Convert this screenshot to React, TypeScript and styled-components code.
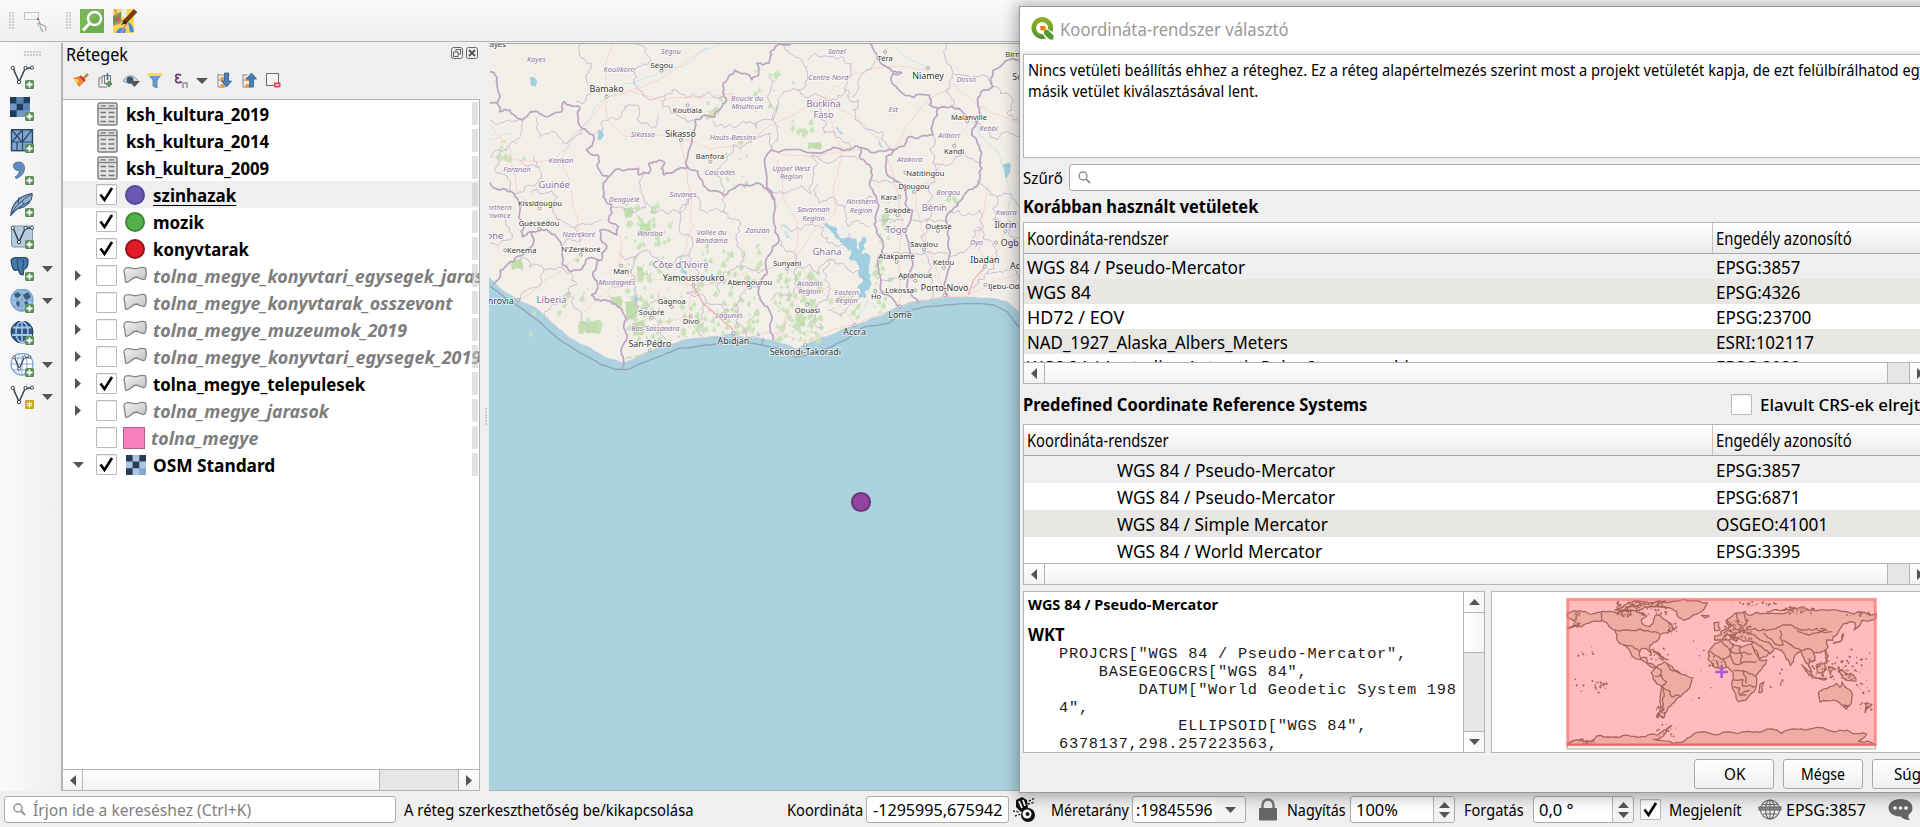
import React, { useLayoutEffect, useRef, useState } from 'react';
import styled, { createGlobalStyle, css } from 'styled-components';

const Global = createGlobalStyle`
  * { box-sizing: border-box; }
  html, body { margin: 0; padding: 0; overflow: hidden; }
  body { font-family: 'Noto Sans', 'Open Sans', sans-serif; color: #000; background: #efefef; }
  svg { display: block; flex: none; }
`;

const line = '#b4b4b4';
const purple = '#8c6d99';

/* ---------- text that fills a given width ---------- */

const FitBox = styled.span<{ $w: number }>`
  display: inline-block;
  flex: none;
  width: ${p => p.$w}px;
  white-space: pre;
`;
const FitInner = styled.span<{ $u?: boolean }>`
  display: inline-block;
  transform-origin: 0 50%;
  ${p => p.$u && css`text-decoration: underline; text-underline-offset: 3px; text-decoration-thickness: 1px;`}
`;
function Fit({ w, u, children }: { w: number; u?: boolean; children: string }) {
  const ref = useRef<HTMLSpanElement>(null);
  const [k, setK] = useState(1);
  useLayoutEffect(() => {
    if (ref.current) setK(w / ref.current.offsetWidth);
  }, [w, children]);
  return (
    <FitBox $w={w}>
      <FitInner ref={ref} $u={u} style={{ transform: `scaleX(${k})` }}>{children}</FitInner>
    </FitBox>
  );
}

/* ---------- frame ---------- */

const Screen = styled.div`
  position: relative;
  width: 1920px;
  height: 827px;
  overflow: hidden;
  display: flex;
  flex-direction: column;
  background: #efefef;
`;
const TopBar = styled.div`
  height: 42px;
  flex: none;
  display: flex;
  align-items: center;
  padding: 0 0 0 9px;
  border-bottom: 1px solid ${line};
  background: linear-gradient(#fafafa, #efefef);
`;
const Grip = styled.div<{ $w: number; $h: number; $m?: string }>`
  width: ${p => p.$w}px;
  height: ${p => p.$h}px;
  margin: ${p => p.$m || 0};
  flex: none;
  background-image: radial-gradient(circle at 1px 1px, #c9c9c9 0.7px, transparent 1px);
  background-size: 3px 3px;
`;
const IconSlot = styled.div<{ $w: number }>`
  width: ${p => p.$w}px;
  flex: none;
`;
const Main = styled.div`
  height: 749px;
  flex: none;
  display: flex;
`;
const SideBar = styled.div`
  width: 61px;
  flex: none;
  padding: 9px 0 0 10px;
  background: linear-gradient(90deg, #fafafa, #efefef);
`;
const SideItem = styled.div`
  height: 32px;
  display: flex;
  align-items: center;
  gap: 8px;
`;
const Panel = styled.div`
  width: 419px;
  flex: none;
  display: flex;
  flex-direction: column;
  border-left: 2px solid ${line};
  margin-top: 1px;
  height: 748px;
`;
const PanelTitle = styled.div`
  height: 24px;
  flex: none;
  display: flex;
  align-items: center;
  justify-content: space-between;
  padding: 0 2px 2px 3px;
  font-size: 17.5px;
`;
const PanelButtons = styled.div`
  display: flex;
  gap: 3px;
  margin-top: -3px;
`;
const PanelTools = styled.div`
  height: 32px;
  flex: none;
  display: flex;
  align-items: center;
  padding: 0 0 4px 10px;
`;
const List = styled.div`
  flex: 1;
  display: flex;
  flex-direction: column;
  background: #fff;
  border: 1px solid ${line};
  border-left: 0;
  overflow: hidden;
`;
const Layers = styled.div`
  flex: 1;
  overflow: hidden;
`;
const LayerRow = styled.div<{ $sel?: boolean; $off?: boolean }>`
  position: relative;
  height: 27px;
  display: flex;
  align-items: center;
  font-size: 18px;
  font-weight: 700;
  background: ${p => (p.$sel ? '#efefef' : '#fff')};
  ${p => p.$off && css`color: #7d7d7d; font-style: italic;`}
`;
const RowEnd = styled.div`
  position: absolute;
  right: 1px;
  top: 2px;
  width: 6px;
  height: 23px;
  background: rgba(200, 200, 200, 0.55);
`;
const Expander = styled.div<{ $down?: boolean }>`
  width: 33px;
  flex: none;
  padding-left: ${p => (p.$down ? 10 : 12)}px;
`;
const Check = styled.div<{ $m?: string }>`
  width: 21px;
  height: 21px;
  flex: none;
  margin: ${p => p.$m || 0};
  background: #fff;
  border: 1px solid #b9b9b9;
  box-shadow: inset 0 1px 1px #ededed;
  border-radius: 1px;
`;
const Glyph = styled.div<{ $w: number; $l: number }>`
  width: ${p => p.$w}px;
  padding-left: ${p => p.$l}px;
  flex: none;
`;
const Ellipse = styled.div<{ $fill: string; $edge: string }>`
  width: 20px;
  height: 20px;
  border-radius: 50%;
  background: ${p => p.$fill};
  border: 2px solid ${p => p.$edge};
`;
const PinkSquare = styled.div`
  width: 22px;
  height: 22px;
  background: #f781bf;
  border: 1px solid #b55f8e;
`;

/* ---------- scroll bars ---------- */

const HBar = styled.div`
  height: 21px;
  flex: none;
  display: flex;
  border-top: 1px solid ${line};
  background: #e6e6e6;
`;
const HPart = styled.div<{ $w: number; $side?: string }>`
  width: ${p => p.$w}px;
  flex: none;
  display: flex;
  align-items: center;
  justify-content: center;
  background: linear-gradient(#fff, #f2f2f2);
  ${p => p.$side !== 'left' && css`border-right: 1px solid ${line};`}
  ${p => p.$side === 'left' && css`border-left: 1px solid ${line};`}
`;
const Spacer = styled.div`
  flex: 1;
`;
const VBar = styled.div`
  width: 21px;
  flex: none;
  display: flex;
  flex-direction: column;
  border-left: 1px solid ${line};
  background: #e6e6e6;
`;
const VPart = styled.div<{ $h: number; $last?: boolean }>`
  height: ${p => p.$h}px;
  flex: none;
  display: flex;
  align-items: center;
  justify-content: center;
  background: linear-gradient(90deg, #fff, #f4f4f4);
  ${p => (p.$last ? css`border-top: 1px solid ${line};` : css`border-bottom: 1px solid ${line};`)}
`;
const MapPane = styled.div`
  flex: 1;
  margin: 1px 0 0 9px;
  border-top: 1px solid #a9a9a9;
  border-bottom: 1px solid ${line};
  overflow: hidden;
`;
const Splitter = styled.div`
  display: flex;
  align-items: center;
`;

/* ---------- dialog ---------- */

const Dialog = styled.div`
  position: absolute;
  left: 1019px;
  top: 6px;
  width: 960px;
  height: 787px;
  border: 1px solid #9a9a9a;
  background: #efefef;
  box-shadow: 0 1px 14px 3px rgba(0, 0, 0, 0.3);
`;
const DialogTitle = styled.div`
  height: 44px;
  display: flex;
  align-items: center;
  gap: 6px;
  padding: 0 0 1px 11px;
  background: #fff;
  color: #999;
  font-size: 17.5px;
`;
const DialogBody = styled.div`
  padding: 3px 0 0 3px;
  display: flex;
  flex-direction: column;
`;
const Message = styled.div`
  height: 104px;
  padding: 5px 5px 5px 4px;
  border: 1px solid ${line};
  background: #fff;
  font-size: 16px;
  line-height: 21px;
`;
const FilterRow = styled.div`
  height: 39px;
  display: flex;
  align-items: center;
  font-size: 17px;
`;
const Field = styled.div<{ $w: number; $h?: number; $m?: string; $p?: number }>`
  width: ${p => p.$w}px;
  height: ${p => p.$h || 27}px;
  flex: none;
  margin: ${p => p.$m || 0};
  padding-left: ${p => p.$p || 0}px;
  display: flex;
  align-items: center;
  background: #fff;
  border: 1px solid #acacac;
  border-radius: 3px;
  overflow: hidden;
`;
const Heading = styled.div<{ $h: number; $b?: number }>`
  height: ${p => p.$h}px;
  padding-bottom: ${p => p.$b || 0}px;
  display: flex;
  align-items: center;
  font-size: 17px;
  font-weight: 700;
`;
const HeadingOption = styled.div`
  display: flex;
  align-items: center;
  gap: 8px;
  margin-left: 364px;
  font-weight: 500;
`;
const Table = styled.div<{ $h: number }>`
  height: ${p => p.$h}px;
  display: flex;
  flex-direction: column;
  border: 1px solid ${line};
  background: #fff;
`;
const THead = styled.div`
  height: 31px;
  flex: none;
  display: flex;
  border-bottom: 1px solid #a6a6a6;
  background: linear-gradient(#fff, #f4f4f4 60%, #e9e9e9);
  font-size: 17.5px;
`;
const TBody = styled.div`
  flex: 1;
  min-height: 0;
  overflow: hidden;
`;
const Cell = styled.div<{ $first?: boolean; $head?: boolean; $pad?: number }>`
  ${p => (p.$first ? css`width: 689px;` : css`flex: 1;`)}
  flex-shrink: 0;
  display: flex;
  align-items: center;
  padding-left: ${p => p.$pad ?? 3}px;
  ${p => p.$head && p.$first && css`border-right: 1px solid #c4c4c4;`}
`;
const TRow = styled.div<{ $h: number; $bg: string }>`
  height: ${p => p.$h}px;
  display: flex;
  background: ${p => p.$bg};
  font-size: 17.5px;
`;
const Panes = styled.div`
  display: flex;
  gap: 6px;
  margin-top: 6px;
  height: 162px;
`;
const WktPane = styled.div`
  width: 462px;
  flex: none;
  display: flex;
  border: 1px solid ${line};
  background: #fff;
  overflow: hidden;
`;
const WktText = styled.div`
  flex: 1;
  overflow: hidden;
  padding: 2px 0 0 4px;
`;
const WktTitle = styled.div<{ $size: number; $h: number }>`
  height: ${p => p.$h}px;
  line-height: 20px;
  font-size: ${p => p.$size}px;
  font-weight: 700;
`;
const Code = styled.pre`
  margin: 0 0 0 31px;
  font: 15.3px/18px 'Liberation Mono', monospace;
  letter-spacing: 0.76px;
  color: #1a1a1a;
`;
const WorldPane = styled.div`
  flex: 1;
  border: 1px solid ${line};
  background: #fff;
`;
const Buttons = styled.div`
  display: flex;
  gap: 9px;
  margin: 6px 0 0 671px;
`;
const Button = styled.div`
  width: 80px;
  height: 30px;
  flex: none;
  display: flex;
  align-items: center;
  justify-content: center;
  border: 1px solid #a8a8a8;
  border-radius: 3px;
  background: linear-gradient(#fefefe, #efefef);
  font-size: 16px;
`;

/* ---------- status bar ---------- */

const Status = styled.div`
  height: 36px;
  flex: none;
  display: flex;
  align-items: center;
  padding: 1px 0 0 4px;
  font-size: 16px;
`;
const Gap = styled.div<{ $w: number }>`
  width: ${p => p.$w}px;
  flex: none;
`;
const Muted = styled.div`
  color: #7f7f7f;
`;
const FieldEnd = styled.div<{ $w: number; $line?: boolean }>`
  width: ${p => p.$w}px;
  height: 100%;
  margin-left: auto;
  display: flex;
  flex-direction: column;
  gap: 4px;
  align-items: center;
  justify-content: center;
  background: linear-gradient(#fbfbfb, #f0f0f0);
  ${p => p.$line && css`border-left: 1px solid #b9b9b9;`}
`;

/* ---------- small drawings ---------- */

type Dir = 'left' | 'right' | 'up' | 'down';
const triangles: Record<Dir, [number, number, string]> = {
  left: [6, 11, '6,0 0,5.5 6,11'],
  right: [6, 11, '0,0 6,5.5 0,11'],
  up: [11, 6, '0,6 5.5,0 11,6'],
  down: [11, 6, '0,0 5.5,6 11,0'],
};
function Tri({ dir }: { dir: Dir }) {
  const [w, h, pts] = triangles[dir];
  return <svg width={w} height={h}><polygon points={pts} fill="#555" /></svg>;
}
const Tick = () => (
  <svg width="19" height="19" viewBox="0 0 19 19"><path d="M3.5 9.5 L7.5 15 L15 3" fill="none" stroke="#000" strokeWidth="2.6" /></svg>
);
const Magnifier = ({ s = 13 }: { s?: number }) => (
  <svg width={s} height={s} viewBox="0 0 13 13" fill="none" stroke="#8f8f8f" strokeWidth="1.4"><circle cx="5" cy="5" r="4" /><path d="M8 8 L12 12" strokeWidth="1.8" /></svg>
);
const Plus = () => (
  <g><rect x="15" y="15" width="9" height="9" rx="1.5" fill="#5c8f5c" /><path d="M19.5 16.5V22.5M16.5 19.5H22.5" stroke="#fff" strokeWidth="1.8" /></g>
);
const Vee = ({ dark = '#33414f' }: { dark?: string }) => (
  <g fill="none" stroke={dark} strokeWidth="1.5"><path d="M3.5 4 L9 17 L15 4 L22 2.5" /><circle cx="2.8" cy="2.8" r="1.6" fill="#fff" strokeWidth="1" /><circle cx="9" cy="17" r="1.7" fill="#fff" strokeWidth="1" /><circle cx="15.5" cy="3" r="1.6" fill="#fff" strokeWidth="1" /><circle cx="22" cy="2.6" r="1.6" fill="#fff" strokeWidth="1" /></g>
);
const Globe = ({ fill, stroke }: { fill: string; stroke: string }) => (
  <g fill="none" stroke={stroke}><circle cx="12" cy="11" r="11" fill={fill} strokeWidth="1.3" /><ellipse cx="12" cy="11" rx="5" ry="11" /><path d="M12 0V22M1 11H23M3 5H21M3 17H21" /></g>
);
const sideIcons: [React.ReactNode, boolean][] = [
  [<><Vee /><Plus /></>, false],
  [<><rect width="20" height="20" fill="#7299c6" /><path d="M0 0h6.6v6.6H0zM13.3 0H20v6.6h-6.7zM6.6 6.6h6.7v6.7H6.6zM0 13.3h6.6V20H0z" fill="#233a5c" /><path d="M6.6 0h6.7v6.6H6.6zM13.3 6.6H20v6.7h-6.7z" fill="#5a83b5" /><Plus /></>, false],
  [<><rect x="1.5" y=".7" width="21" height="21" fill="#7fa4cf" stroke="#2c4663" strokeWidth="1.4" /><path d="M12.5 1V22M1 13H22M2 1L12 13M12 1L2 13M22 1L13 12M7 13V22" stroke="#2c4663" strokeWidth="1.2" /><Plus /></>, false],
  [<><path d="M9 1C4 1 2.500 4 4 7C5 9.500 8 10 9.500 9C9.500 12 8 14 5 16L6 17.500C11 16 14.500 12 14.500 7C14.500 3 12 1 9 1Z" fill="#5f8cbf" stroke="#3f6793" strokeWidth=".8" /><Plus /></>, false],
  [<><path d="M1 22C1 14 7 3 22 .5C23 7 18 14 7 16Z" fill="#8fb1d4" stroke="#33506f" strokeWidth="1.1" /><path d="M.5 23C4 14 12 7 21 1.500M8 11L9 4M12 8L14 12M8 15L20 8" fill="none" stroke="#33506f" /><Plus /></>, false],
  [<><rect x="1.500" y="1" width="21" height="21" rx="2" fill="#b7cade" stroke="#7d95ad" /><Vee /><Plus /></>, false],
  [<><path d="M1 3C3 0 7 0 9 1C12 -.5 18 0 18 4C18 9 17 12 14 12L13 18L10 17L8 12C6 15 3 13 2 9Z" fill="#4479ab" stroke="#23425f" strokeWidth="1.2" /><path d="M8 2C6 5 8 8 8 11M12 2C15 4 13 9 12 12" stroke="#23425f" fill="none" /><Plus /></>, true],
  [<><Globe fill="#9fc0e2" stroke="#7ba3cf" /><path d="M4 5l4-2 3 3-3 3-3-1zM13 6l5-3 3 5-4 3-3-2zM7 12l3 1-1 5-3-3zM14 13l3-1 2 4-3 2z" fill="#3d5d7d" /><Plus /></>, true],
  [<><circle cx="12" cy="11" r="11" fill="#32588a" stroke="#1f3656" /><path d="M3 6.500H21M2 14H22" stroke="#a9c6e6" strokeWidth="1.800" /><path d="M12 1V21" stroke="#a9c6e6" strokeWidth="1.500" /><ellipse cx="12" cy="11" rx="6" ry="10.500" fill="none" stroke="#a9c6e6" strokeWidth="1.500" /><Plus /></>, false],
  [<><Globe fill="#fff" stroke="#7fa9d6" /><g transform="translate(2 2) scale(.8)"><Vee /></g><Plus /></>, true],
  [<><Vee /><rect x="15" y="15" width="9" height="9" rx="1" fill="#c9a31a" /><path d="M19.500 16.500V22.500M16.800 18L22.200 21M22.200 18L16.800 21" stroke="#fff" strokeWidth="1.100" /></>, true],
];
const TableIcon = () => (
  <svg width="21" height="24" viewBox="0 0 21 24"><rect x="1" y="1" width="19" height="22" rx="1.500" fill="#e3e3e3" stroke="#808080" strokeWidth="1.500" /><path d="M1 6.500H20" stroke="#808080" strokeWidth="1.400" /><path d="M3.500 3.800H9M11.500 3.800H17.500M3.500 10.500H9M11.500 10.500H17.500M3.500 15H9M11.500 15H17.500M3.500 19.500H9M11.500 19.500H17.500" stroke="#747474" strokeWidth="1.300" /></svg>
);
const PolyIcon = () => (
  <svg width="24" height="20" viewBox="0 0 24 20"><defs><linearGradient id="pg" x1="0" y1="0" x2="1" y2="1"><stop offset="0" stopColor="#f4f4f4" /><stop offset="1" stopColor="#bdbdbd" /></linearGradient></defs><path d="M3 2C7 .5 10 3.500 14 2.500C17 1.500 20 .5 22.500 2C23.500 6 23.500 10 22 13C19 15 17 11.500 13 11C9 11.500 7 16.500 3 16.500C1.500 15 2.500 11 1.500 8C.5 5 1 3 3 2Z" fill="url(#pg)" stroke="#858585" strokeWidth="1.300" /></svg>
);
const OsmIcon = () => (
  <svg width="20" height="20"><rect width="20" height="20" fill="#a9c6e6" /><path d="M0 0h6.600v6.600H0zM13.300 0H20v6.600h-6.700zM6.600 6.600h6.700v6.700H6.600zM0 13.300h6.600V20H0z" fill="#2b3a50" /><path d="M13.300 13.300H20V20h-6.700z" fill="#86a6cb" /></svg>
);

/* ---------- layer tree ---------- */

type Layer = { name: string; w: number; kind: string; on?: boolean; sel?: boolean; exp?: Dir; fill?: string; edge?: string };
const layers: Layer[] = [
  { name: 'ksh_kultura_2019', w: 143, kind: 'table' },
  { name: 'ksh_kultura_2014', w: 143, kind: 'table' },
  { name: 'ksh_kultura_2009', w: 143, kind: 'table' },
  { name: 'szinhazak', w: 83, kind: 'dot', on: true, sel: true, fill: '#6a58b4', edge: '#55479a' },
  { name: 'mozik', w: 51, kind: 'dot', on: true, fill: '#54b04a', edge: '#3d8535' },
  { name: 'konyvtarak', w: 96, kind: 'dot', on: true, fill: '#e31a28', edge: '#8d1720' },
  { name: 'tolna_megye_konyvtari_egysegek_jaras', w: 330, kind: 'poly', exp: 'right' },
  { name: 'tolna_megye_konyvtarak_osszevont', w: 300, kind: 'poly', exp: 'right' },
  { name: 'tolna_megye_muzeumok_2019', w: 254, kind: 'poly', exp: 'right' },
  { name: 'tolna_megye_konyvtari_egysegek_2019', w: 328, kind: 'poly', exp: 'right' },
  { name: 'tolna_megye_telepulesek', w: 212, kind: 'poly', on: true, exp: 'right' },
  { name: 'tolna_megye_jarasok', w: 176, kind: 'poly', exp: 'right' },
  { name: 'tolna_megye', w: 107, kind: 'pink' },
  { name: 'OSM Standard', w: 122, kind: 'osm', on: true, exp: 'down' },
];

function LayerItem({ l }: { l: Layer }) {
  const table = l.kind === 'table';
  return (
    <LayerRow $sel={l.sel} $off={!l.on && !table}>
      <Expander $down={l.exp === 'down'}>{l.exp && <Tri dir={l.exp} />}</Expander>
      {table && <Glyph $w={30} $l={1}><TableIcon /></Glyph>}
      {!table && <Check>{l.on && <Tick />}</Check>}
      {l.kind === 'dot' && <Glyph $w={36} $l={8}><Ellipse $fill={l.fill!} $edge={l.edge!} /></Glyph>}
      {l.kind === 'poly' && <Glyph $w={36} $l={6}><PolyIcon /></Glyph>}
      {l.kind === 'pink' && <Glyph $w={34} $l={6}><PinkSquare /></Glyph>}
      {l.kind === 'osm' && <Glyph $w={36} $l={9}><OsmIcon /></Glyph>}
      <Fit w={l.w} u={l.sel}>{l.name}</Fit>
      <RowEnd />
    </LayerRow>
  );
}

/* ---------- map of West Africa ---------- */

type Pt = [number, number];
const parse = (s: string): Pt[] => s.trim().split(/\s+/).map(p => p.split(',').map(Number) as Pt);
function random(seed: number) {
  let a = seed;
  return () => {
    a = (a * 1664525 + 1013904223) % 4294967296;
    return a / 4294967296;
  };
}
function rough(s: string, amp: number, seed = 7) {
  const r = random(seed + s.length * 31);
  let pts = parse(s);
  for (let k = 0; k < 3; k++) {
    const out: Pt[] = [pts[0]];
    for (let i = 1; i < pts.length; i++) {
      const [x0, y0] = pts[i - 1];
      const [x1, y1] = pts[i];
      const d = Math.hypot(x1 - x0, y1 - y0);
      if (d > 9) {
        const o = (r() - 0.5) * d * amp;
        out.push([(x0 + x1) / 2 - ((y1 - y0) / d) * o, (y0 + y1) / 2 + ((x1 - x0) / d) * o]);
      }
      out.push(pts[i]);
    }
    pts = out;
  }
  return pts.map(p => p.map(v => v.toFixed(1)).join(',')).join(' ');
}

const coast = '0,715 25,740 60,765 85,782 130,800 180,845 220,880 300,925 350,955 388,968 430,955 480,932 560,905 640,893 720,882 800,895 840,900 890,918 905,928 935,912 980,892 1040,870 1080,855 1130,835 1200,803 1230,792 1290,780 1350,773 1420,772 1480,775 1530,785 1572,820';
const maritime = '0,738 8,745 60,785 100,810 140,840 200,895 260,935 330,975 370,988 410,988 470,962 560,925 640,915 750,905 805,915 860,930 905,952 940,945 1000,925 1060,895 1110,860 1180,850 1215,820 1290,800 1380,793 1440,790 1490,795 1530,815 1572,870';
const nations = [
  '0,95 20,110 30,165 22,190 28,215 60,210 95,240 120,215 160,228 215,210 220,185 265,200 262,235 272,265 305,285 308,300 285,330 318,345 318,380 350,410',
  '350,410 335,430 335,470 360,495 350,540 380,560 375,585 325,572 328,600 345,625 330,660 290,655 265,690 240,695 215,675 210,610 180,580 120,575 95,590 100,560 88,500 62,455 0,428',
  '0,188 24,190',
  '120,575 130,600 80,650 30,690 8,735',
  '320,660 318,735 300,765 360,785 400,830 400,870 388,930 388,985',
  '350,410 380,385 440,385 440,405 470,400 470,370 500,360 515,365 515,405 585,382 585,345 605,240 665,230 700,180 690,130 725,90 775,120 795,105 790,70 825,70 830,35 860,12 890,12',
  '585,382 615,395 635,440 690,465 735,435 800,432 838,470 845,500 855,600 830,640 820,700 795,740 800,780 830,850 840,900',
  '838,480 822,340 832,330 1000,330 1065,330 1080,318 1105,325 1195,330 1240,290 1310,285 1325,205 1300,195 1300,165 1210,150 1190,130 1192,100 1218,98 1190,95 1150,60 1125,12',
  '1098,325 1095,355 1130,385 1135,460 1150,500 1145,570 1165,620 1150,690 1155,750 1190,775 1210,800',
  '1195,330 1172,350 1172,395 1230,440 1228,490 1250,510 1250,770 1268,790',
  '1325,205 1365,198 1440,250 1425,285 1455,340 1455,385 1440,440 1400,470 1360,515 1355,620 1355,770',
  '1440,250 1442,180 1488,140 1490,90 1568,60',
  '805,915 810,895',
];
const regions = [
  '270,12 265,45 300,70 290,130 300,155 255,185', '430,12 460,40 470,70 435,110 440,150 520,165 560,160 600,160 690,170', '520,165 510,200 540,220 600,240',
  '305,285 340,240 390,225 425,195 435,240 480,265 500,230', '655,240 690,260 740,250 790,265 835,240 835,130 825,110', '690,465 660,400 700,350 830,280 835,330',
  '920,60 940,110 910,150 930,170 1010,180 1050,150 1090,180 1080,240 1160,275 1200,330', '920,60 870,20', '910,150 860,170 845,250 850,300 830,330', '1010,180 970,230 990,280 1040,300 1065,330', '1050,150 1070,70 1040,50 940,60', '1140,60 1090,120 1070,170',
  '830,460 900,450 950,460 950,345', '950,345 1000,370 1090,360', '970,430 975,490 1050,500 1110,490 1130,470', '1050,500 1060,560 1120,560', '860,600 900,640 910,680 1020,660 1060,690 1110,720', '860,560 920,570 990,560 1000,610 1060,580', '910,680 900,760 830,780', '1000,660 990,720 1000,780 960,830 985,860', '1100,770 1060,800 1000,810',
  '460,400 445,440 465,490 420,520 360,500', '465,490 520,520 580,500 600,470 620,510 700,520 740,545', '600,470 560,560 590,640 500,660 440,640 380,640', '700,520 695,465', '740,545 730,620 745,680 810,690', '590,640 620,700 580,760 640,790 740,780 795,740', '440,640 430,720 440,800 500,850 520,900', '400,830 470,800 500,760', '640,790 620,850 630,893', '740,780 730,850 790,893', '745,680 690,700 680,760', '430,720 380,740 320,735',
  '1130,420 1220,430', '1150,540 1225,540', '1160,640 1250,640', '1155,720 1250,715', '1310,370 1360,375 1455,370', '1310,285 1310,370 1300,440 1290,540', '1250,540 1355,545', '1250,640 1355,640', '1290,540 1280,640 1300,700 1300,780', '1360,515 1450,510 1460,560 1400,640 1360,650', '1440,420 1500,470 1568,500', '1440,560 1490,620 1470,700 1420,740', '1500,470 1490,540 1540,590 1568,600', '1470,700 1530,690 1568,720', '1488,140 1540,170 1530,220 1568,260', '1370,198 1350,150 1370,100 1350,12', '1370,100 1440,110 1488,140', '1440,240 1500,300 1568,290',
  '0,240 60,240 95,240 90,290 50,330 0,350', '135,230 150,290 230,310 270,265', '90,360 145,380 130,440 80,460 62,455', '145,380 130,350', '200,470 195,530 255,560 275,550 330,540', '120,460 200,470', '255,560 270,600 215,610', '60,600 0,610', '90,650 160,690 240,700 235,760 270,820 290,880', '160,690 140,740 90,780', '240,760 180,800 160,830', '0,520 40,530 60,600', '20,350 20,400 62,455',
];
const roads = [
  '345,170 400,160 500,120 560,80 640,30', '345,170 350,240 400,290 560,295 650,330 790,290 900,225 990,170', '345,170 340,80 360,12', '345,170 210,360 235,440 260,550 270,640', '0,350 80,360 210,360', '640,240 720,160 600,170 500,180 400,150',
  '600,735 630,790 720,870', '600,735 575,640 600,560 585,400 560,300', '600,735 480,720 380,690 390,600 350,540', '600,735 700,720 840,680 900,650 910,560 870,480 850,360', '720,875 850,880 935,905 1080,855 1210,800 1350,770 1415,770', '1080,855 990,760 900,650 1020,520 1040,330 990,170', '990,170 1080,230 1195,330 1230,260 1300,180 1370,130', '990,170 1080,100 1290,90', '1210,800 1210,660 1210,480 1170,350', '1345,765 1300,640 1260,450 1370,330 1420,240', '1415,765 1465,680 1525,575 1568,540', '1415,765 1500,720 1568,700', '1465,680 1440,600 1470,440', '85,780 200,700 270,640', '270,820 390,720', '500,850 590,830 600,735', '850,340 950,350 1040,335 1100,330', '1370,130 1450,200 1520,230 1568,250', '840,900 900,780 1000,740 1060,780', '0,250 60,330 80,460 145,500',
];
const rivers = [
  '200,350 250,280 300,230 345,170 400,130 500,95 600,60 680,12', '570,640 565,700 585,730', '430,740 440,780 405,770', '1300,100 1200,20', '1420,235 1500,330 1530,400 1540,480 1530,560', '0,300 60,280', '1080,850 1120,780', '870,560 890,600', '1150,300 1165,325',
];
const lakes = [
  '985,550 1005,558 1020,560 1045,595 1085,606 1098,640 1110,638 1125,665 1120,700 1122,740 1110,775 1092,772 1104,720 1092,680 1070,630 1035,608 1020,585', '1092,640 1092,620 1110,590 1100,640', '118,110 132,112 134,140 122,138', '322,268 332,272 328,300 318,300', '1518,372 1534,368 1536,400 1525,415', '562,655 572,690 585,705 570,700', '430,760 440,780 425,792', '868,570 885,590 880,595', '1020,260 1045,280 1040,285', '1148,300 1162,320 1152,316', '893,120 903,132 897,132', '790,875 800,885 792,893',
];
const woods = [
  '435,678 450,680 448,725 437,725', '400,785 430,780 432,835 405,845', '355,770 385,768 390,800 362,795', '262,845 325,840 328,880 262,882', '62,665 98,650 100,690 65,690', '420,850 450,840 455,885 425,890', '942,308 975,305 980,328 940,328', '395,505 420,500 420,530 400,535', '445,550 470,550 470,590 440,585', '1158,525 1180,520 1175,545 1160,560', '248,660 265,655 262,670', '1178,712 1190,712 1190,725 1178,725', '905,820 920,815 930,860 910,860', '940,700 960,705 955,720 938,718', '395,960 470,938 430,948 400,955',
];
function scatter() {
  const r = random(42);
  const zones: [number, number, number, number, number][] = [
    [840, 690, 140, 210, 120], [400, 640, 180, 260, 70], [600, 610, 200, 260, 60], [380, 480, 160, 140, 40], [640, 170, 40, 60, 12], [760, 90, 100, 160, 16], [890, 240, 60, 40, 10], [1130, 640, 40, 180, 20], [20, 300, 80, 60, 14], [100, 740, 260, 140, 20], [1150, 480, 60, 120, 12], [690, 280, 80, 160, 12], [1000, 760, 90, 80, 12], [1330, 440, 60, 60, 6], [590, 800, 200, 80, 40],
  ];
  return zones.flatMap(([x, y, w, h, n]) =>
    Array.from({ length: n }, () => {
      const s = 4 + r() * 9;
      const cx = x + r() * w;
      const cy = y + r() * h;
      return `${cx},${cy} ${cx + s * r()},${cy - s * 0.6} ${cx + s},${cy + s * r()} ${cx + s * 0.5},${cy + s * 1.3} ${cx - s * 0.4},${cy + s * 0.7}`;
    }),
  );
}
const specks = scatter();

type Label = [string, number, number, ('n' | 'c' | 't' | 'r')];
const labels: Label[] = [
  ['Kayes', 137, 58, 'r'], ['Koulikoro', 382, 88, 'r'], ['Ségou', 535, 33, 'r'], ['Ségou', 508, 76, 't'], ['Bamako', 345, 148, 'c'], ['Koutiala', 584, 211, 't'], ['Sikasso', 452, 284, 'r'], ['Sikasso', 564, 281, 'c'],
  ['Boucle du', 761, 174, 'r'], ['Mouhoun', 761, 199, 'r'], ['Hauts-Bassins', 718, 292, 'r'], ['Banfora', 651, 350, 't'], ['Cascades', 680, 398, 'r'], ['Sahel', 1026, 35, 'r'], ['Centre-Nord', 1001, 113, 'r'], ['Burkina', 987, 192, 'n'], ['Faso', 987, 223, 'n'], ['Est', 1193, 208, 'r'],
  ['Téra', 1169, 54, 't'], ['Niamey', 1296, 107, 'c'], ['Dosso', 1409, 119, 'r'], ['Birnin', 1556, 42, 't'], ['Sokoto', 1588, 110, 'c'], ['Malanville', 1417, 231, 't'], ['Kebbi', 1475, 265, 'r'], ['Alibori', 1358, 286, 'r'], ['Kandi', 1373, 335, 't'], ['Atakora', 1242, 358, 'r'], ['Natitingou', 1288, 399, 't'],
  ['Upper West', 891, 384, 'r'], ['Region', 891, 409, 'r'], ['Djougou', 1254, 440, 't'], ['Kara', 1180, 471, 't'], ['Borgou', 1356, 457, 'r'], ['Northern', 1098, 485, 'r'], ['Region', 1098, 510, 'r'], ['Savannah', 957, 509, 'r'], ['Region', 957, 534, 'r'], ['Sokodé', 1206, 511, 't'], ['Bénin', 1315, 502, 'n'], ['Kwara', 1528, 516, 'r'], ['Ouèssè', 1327, 558, 't'], ['Ilorin', 1525, 554, 'c'],
  ['Togo', 1202, 570, 'n'], ['Ghana', 997, 634, 'n'], ['Savalou', 1284, 612, 't'], ['Oyo', 1439, 608, 'r'], ['Ogbomoso', 1580, 609, 'c'], ['Atakpamé', 1203, 650, 't'], ['Kétou', 1342, 667, 't'], ['Ibadan', 1464, 661, 'c'], ['Ado', 1563, 678, 'c'], ['Aplahoué', 1258, 706, 't'], ['Lokossa', 1212, 751, 't'], ['Porto-Novo', 1345, 744, 'c'], ['Ijebu-Ode', 1526, 738, 't'], ['Ho', 1142, 770, 't'], ['Lomé', 1213, 824, 'c'], ['Accra', 1079, 877, 'c'],
  ['Ashanti', 945, 730, 'r'], ['Region', 945, 755, 'r'], ['Eastern', 1055, 757, 'r'], ['Region', 1055, 782, 'r'], ['Obuasi', 939, 810, 't'], ['Sunyani', 879, 669, 't'], ['Sekondi-Takoradi', 933, 937, 'c'], ['Abidjan', 720, 904, 'c'], ['Lagunes', 708, 827, 'r'], ['Abengourou', 769, 728, 't'], ['Zanzan', 792, 572, 'r'], ['Vallée du', 656, 577, 'r'], ['Bandama', 656, 602, 'r'], ['Woroba', 473, 580, 'r'], ['Savanes', 571, 463, 'r'], ['Denguélé', 397, 478, 'r'],
  ["Côte d'Ivoire", 564, 673, 'n'], ['Yamoussoukro', 602, 715, 'c'], ['Man', 388, 693, 't'], ['Montagnes', 375, 728, 'r'], ['Gagnoa', 538, 785, 't'], ['Soubré', 478, 818, 't'], ['Divo', 594, 845, 't'], ['Bas-Sassandra', 489, 866, 'r'], ['San-Pédro', 473, 912, 'c'], ['Liberia', 182, 780, 'n'], ['Monrovia', 12, 782, 'c'],
  ['Kankan', 210, 362, 'r'], ['Faranah', 80, 388, 'r'], ['Guinée', 190, 434, 'n'], ['Kissidougou', 148, 491, 't'], ['Guéckédou', 145, 551, 't'], ['Nzérékoré', 263, 584, 'r'], ["N'Zérékoré", 269, 628, 't'], ['Kenema', 94, 632, 't'], ['Northern', 20, 501, 'r'], ['Province', 20, 526, 'r'], ['Sierra Leone', -42, 586, 'n'], ['Kayes', 16, 14, 't'],
];
const towns = '345,170 508,92 585,196 565,300 652,365 1169,36 1296,84 1412,243 1373,317 1229,398 1211,470 1254,456 1206,526 1325,573 1525,574 1497,608 1284,628 1203,666 1342,683 1464,680 1258,722 1258,751 1345,766 1466,734 1140,754 1212,799 1079,856 939,794 879,686 933,915 720,879 769,743 602,735 388,677 538,801 478,833 594,829 473,931 83,780 147,505 146,567 269,644 45,631';
const labelStyle = {
  n: { size: 9.4, fill: purple, italic: false },
  c: { size: 8.9, fill: '#333', italic: false },
  t: { size: 7.6, fill: '#333', italic: false },
  r: { size: 7.4, fill: purple, italic: true },
};
const px = (x: number) => 1 + x * 0.338;
const py = (y: number) => y / 3 - 4;

function AfricaMap() {
  return (
    <svg width="531" height="747" fontFamily="Noto Sans, sans-serif">
      <rect width="531" height="747" fill="#aad3df" />
      <g transform="translate(1 -4) scale(.338 .33333)" fill="none" strokeLinejoin="round">
        <polygon points={`-5,-5 -5,712 ${rough(coast, 0.12)} 1575,-5`} fill="#f2efe9" stroke="#c9b9cf" strokeWidth="1.5" />
        {woods.map((p, i) => <polygon key={i} points={rough(p, 0.4)} fill="#c2dcae" />)}
        {specks.map((p, i) => <polygon key={i} points={p} fill="#c9e2ba" />)}
        {rivers.map((p, i) => <polyline key={i} points={rough(p, 0.3)} stroke="#bfdfe8" strokeWidth="2.4" />)}
        {roads.map((p, i) => <polyline key={i} points={rough(p, 0.15, 3)} stroke="#f9cdbf" strokeWidth="2.400" />)}
        <polyline points="600,735 630,790 720,870" stroke="#f0a0a8" strokeWidth="3" />
        <polyline points="1415,765 1430,720 1465,680" stroke="#f0a0a8" strokeWidth="3" />
        {lakes.map((p, i) => <polygon key={i} points={rough(p, 0.6)} fill="#9fcfe0" />)}
        {regions.map((p, i) => <polyline key={i} points={rough(p, 0.65)} stroke="#c9b8d1" strokeWidth="2.800" />)}
        {nations.map((p, i) => <polyline key={i} points={rough(p, 0.4)} stroke="#bba3c1" strokeWidth="5" />)}
        <polyline points={rough(maritime, 0.06)} stroke="#8fa3bd" strokeWidth="4" />
      </g>
      {parse(towns).map(([x, y], i) => (
        <circle key={i} cx={px(x)} cy={py(y)} r="1.5" fill="#fff" stroke="#777" strokeWidth=".7" />
      ))}
      {labels.map(([t, x, y, k], i) => {
        const s = labelStyle[k];
        return (
          <text key={i} x={px(x)} y={py(y) + s.size * 0.34} fontSize={s.size} fill={s.fill} fontStyle={s.italic ? 'italic' : 'normal'} textAnchor="middle" stroke="#fff" strokeOpacity=".75" strokeWidth="1.6" paintOrder="stroke">{t}</text>
        );
      })}
      <circle cx="372" cy="458" r="9" fill="#9145a0" stroke="#6f3679" strokeWidth="2.200" />
    </svg>
  );
}

/* ---------- world extent preview ---------- */

const continents = [
  '262,100 310,95 360,97 410,100 440,92 480,98 500,108 484,120 486,130 510,140 520,130 524,108 540,105 560,122 585,148 560,158 540,165 528,185 510,196 508,206 515,225 505,212 485,205 478,220 482,235 500,232 502,250 530,262 515,262 490,244 455,228 430,195 412,182 405,150 385,135 365,122 330,128 305,140 262,145 300,130 262,112',
  '535,255 555,246 585,270 602,282 636,294 622,332 600,350 576,372 560,395 550,415 532,405 540,350 545,320 520,298 514,278',
  '530,78 575,66 640,62 682,68 670,90 640,105 612,121 596,112 590,96 570,84',
  '705,190 745,180 755,192 800,195 815,192 824,215 838,240 860,240 846,265 828,290 828,320 810,345 798,360 775,365 765,340 755,310 760,280 745,262 705,262 685,240 685,215',
  '704,180 704,168 725,164 722,156 740,145 752,140 738,122 765,100 795,94 806,106 860,100 900,100 940,84 970,80 1010,92 1100,95 1188,100 1188,112 1145,122 1122,150 1125,128 1090,132 1075,155 1060,170 1058,182 1040,180 1044,200 1020,218 1002,218 1006,240 992,246 988,236 985,258 996,276 974,240 962,212 942,232 932,257 916,230 905,210 884,205 872,220 838,236 822,208 815,192 820,184 790,184 775,172 770,184 755,165 735,165 726,180',
  '1015,338 1050,320 1068,310 1080,322 1086,306 1118,345 1108,378 1085,376 1060,360 1020,366',
  '840,312 852,306 846,336 837,338',
  '965,254 990,275 1000,290 985,282', '995,290 1040,296 1030,300', '1010,255 1035,248 1030,278 1012,276', '1045,262 1060,262 1052,285', '1075,270 1120,285 1128,302 1090,294', '1160,368 1176,374 1155,398', '1035,210 1045,228 1040,250', '1060,190 1085,180 1090,160 1080,185', '702,128 716,126 720,150 704,152', '664,106 688,108 676,114', '515,208 540,222 565,240 545,230',
  '262,494 330,484 350,468 440,465 530,465 575,437 550,468 520,478 600,488 690,460 800,455 870,447 905,460 1000,445 1080,450 1160,462 1135,484 1186,493',
  '405,90 440,72 500,66 560,62 520,80 470,92', '1090,380 1105,378 1100,388',
];
const frontiers = [
  '405,150 505,152 540,162', '362,97 365,122', '430,195 460,200 480,215', '545,320 570,335 575,350 600,345', '548,318 552,350 545,400', '560,250 570,268 600,280', '525,290 545,285 560,305 545,320', '530,262 545,272 540,290',
  '690,215 720,235 750,225 760,190', '725,185 745,205 775,220 815,222', '780,195 785,250', '750,225 760,250 830,245', '710,240 715,262', '730,235 740,262', '760,270 800,275 828,290', '760,300 790,300 790,320 828,320', '790,270 800,310', '760,320 780,325 780,345 810,330', '800,345 780,345', '740,120 760,140 800,150 850,150', '755,165 790,150 840,180', '770,100 775,135', '790,98 800,130 775,150', '845,148 900,140 960,150 1010,145 1055,155', '850,160 880,185 910,195 900,150', '840,180 870,190 880,205', '910,180 940,200 965,212', '950,150 990,165 1040,150 1020,145', '965,212 985,205 1002,218', '820,185 850,205 870,220', '440,80 480,84', '430,90 500,74', '730,160 745,150 760,160', '745,180 770,160', '860,95 940,95',
];
function islands() {
  const r = random(9);
  const zones: [number, number, number, number, number][] = [
    [410, 64, 150, 46, 130], [262, 95, 40, 50, 20], [510, 205, 55, 35, 25], [970, 240, 160, 60, 80], [1070, 200, 110, 80, 22], [340, 305, 40, 22, 18], [1130, 300, 40, 40, 14], [750, 66, 140, 12, 24], [905, 82, 100, 20, 40], [735, 120, 80, 60, 80], [525, 380, 30, 35, 30], [280, 195, 80, 40, 9], [530, 430, 60, 40, 16], [560, 130, 40, 30, 20], [600, 250, 120, 120, 9], [870, 230, 60, 120, 10], [1140, 365, 40, 30, 14], [640, 180, 70, 60, 9], [262, 290, 100, 50, 12], [262, 478, 80, 14, 22], [680, 240, 50, 24, 14], [1090, 96, 90, 14, 14],
  ];
  return zones.flatMap(([x, y, w, h, n]) => Array.from({ length: n }, () => [x + r() * w, y + r() * h, 1 + r() * 2.6] as const));
}
const isles = islands();

function WorldMap() {
  return (
    <svg width="440" height="160">
      <g transform="translate(-12 -12) scale(.33333)">
        <rect x="262" y="495" width="925" height="12" fill="#f2f2ea" stroke="#a9a99a" strokeWidth="3" />
        <rect x="262" y="58" width="925" height="436" fill="#ffbcbc" />
        <g fill="#f0aba4" stroke="#a5645c" strokeWidth="3.800" strokeLinejoin="round">
          {continents.map((p, i) => <polygon key={i} points={rough(p, 0.3, 5)} />)}
          {frontiers.map((p, i) => <polyline key={i} points={rough(p, 0.4, 5)} fill="none" />)}
        </g>
        {isles.map(([x, y, s], i) => <circle key={i} cx={x} cy={y} r={s} fill="#a5645c" />)}
        <rect x="263" y="58" width="923" height="436" fill="none" stroke="#ff6b6b" strokeOpacity=".65" strokeWidth="9" />
        <path d="M725 257V294M706 276H744" stroke="#b455d8" strokeWidth="8" />
      </g>
    </svg>
  );
}

/* ---------- dialog tables ---------- */

type CRow = { a: string; wa: number; b: string; wb: number; bg: string };
const recent: CRow[] = [
  { a: 'WGS 84 / Pseudo-Mercator', wa: 218, b: 'EPSG:3857', wb: 84, bg: '#efefef' },
  { a: 'WGS 84', wa: 64, b: 'EPSG:4326', wb: 84, bg: '#e8e7e3' },
  { a: 'HD72 / EOV', wa: 97, b: 'EPSG:23700', wb: 95, bg: '#fff' },
  { a: 'NAD_1927_Alaska_Albers_Meters', wa: 261, b: 'ESRI:102117', wb: 98, bg: '#e8e7e3' },
  { a: 'WGS 84 / Australian Antarctic Polar Stereographic', wa: 390, b: 'EPSG:3032', wb: 84, bg: '#fff' },
];
const predefined: CRow[] = [
  { a: 'WGS 84 / Pseudo-Mercator', wa: 218, b: 'EPSG:3857', wb: 84, bg: '#efefef' },
  { a: 'WGS 84 / Pseudo-Mercator', wa: 218, b: 'EPSG:6871', wb: 84, bg: '#fff' },
  { a: 'WGS 84 / Simple Mercator', wa: 211, b: 'OSGEO:41001', wb: 112, bg: '#e8e7e3' },
  { a: 'WGS 84 / World Mercator', wa: 205, b: 'EPSG:3395', wb: 84, bg: '#fff' },
];
function CrsTable({ rows, h, rowH, pad }: { rows: CRow[]; h: number; rowH: number; pad?: number }) {
  return (
    <Table $h={h}>
      <THead>
        <Cell $first $head><Fit w={142}>Koordináta-rendszer</Fit></Cell>
        <Cell $head><Fit w={136}>Engedély azonosító</Fit></Cell>
      </THead>
      <TBody>
        {rows.map((r, i) => (
          <TRow key={i} $h={rowH} $bg={r.bg}>
            <Cell $first $pad={pad}><Fit w={r.wa}>{r.a}</Fit></Cell>
            <Cell><Fit w={r.wb}>{r.b}</Fit></Cell>
          </TRow>
        ))}
      </TBody>
      <HBar>
        <HPart $w={21}><Tri dir="left" /></HPart>
        <HPart $w={843} />
        <Gap $w={21} />
        <HPart $w={21} $side="left"><Tri dir="right" /></HPart>
      </HBar>
    </Table>
  );
}

const wkt = `PROJCRS["WGS 84 / Pseudo-Mercator",
    BASEGEOGCRS["WGS 84",
        DATUM["World Geodetic System 198
4",
            ELLIPSOID["WGS 84",
6378137,298.257223563,`;

function CrsDialog() {
  return (
    <Dialog>
      <DialogTitle>
        <svg width="23" height="23" viewBox="0 0 23 23">
          <defs><linearGradient id="q" x1="0" y1="0" x2="0" y2="1"><stop offset="0" stopColor="#93b023" /><stop offset="1" stopColor="#589632" /></linearGradient></defs>
          <path d="M11 0A11 11 0 1 0 15 21.400L11.500 17A6 6 0 1 1 17 12L21.400 15A11 11 0 0 0 11 0Z" fill="url(#q)" />
          <path d="M13 13L17 13L22.500 18.500V22.500H18.500L13 17Z" fill="#589632" />
          <path d="M9.500 9H14L16 12L13 14.500L9.500 13Z" fill="#f5b041" />
          <path d="M9.500 9H14L13 13L9.500 13Z" fill="#ee7913" />
        </svg>
        <Fit w={229}>Koordináta-rendszer választó</Fit>
      </DialogTitle>
      <DialogBody>
        <Message>
          <Fit w={899}>Nincs vetületi beállítás ehhez a réteghez. Ez a réteg alapértelmezés szerint most a projekt vetületét kapja, de ezt felülbírálhatod egy</Fit>
          <Fit w={230}>másik vetület kiválasztásával lent.</Fit>
        </Message>
        <FilterRow>
          <Fit w={40}>Szűrő</Fit>
          <Field $w={900} $m="0 0 0 6px" $p={8}><Magnifier /></Field>
        </FilterRow>
        <Heading $h={25} $b={6}><Fit w={235}>Korábban használt vetületek</Fit></Heading>
        <CrsTable rows={recent} h={162} rowH={25} />
        <Heading $h={40}>
          <Fit w={344}>Predefined Coordinate Reference Systems</Fit>
          <HeadingOption><Check /><Fit w={188}>Elavult CRS-ek elrejtése</Fit></HeadingOption>
        </Heading>
        <CrsTable rows={predefined} h={161} rowH={27} pad={93} />
        <Panes>
          <WktPane>
            <WktText>
              <WktTitle $size={14.5} $h={31}><Fit w={190}>WGS 84 / Pseudo-Mercator</Fit></WktTitle>
              <WktTitle $size={17} $h={20}><Fit w={37}>WKT</Fit></WktTitle>
              <Code>{wkt}</Code>
            </WktText>
            <VBar>
              <VPart $h={21}><Tri dir="up" /></VPart>
              <VPart $h={40} />
              <Spacer />
              <VPart $h={21} $last><Tri dir="down" /></VPart>
            </VBar>
          </WktPane>
          <WorldPane><WorldMap /></WorldPane>
        </Panes>
        <Buttons>
          <Button><Fit w={21}>OK</Fit></Button>
          <Button><Fit w={44}>Mégse</Fit></Button>
          <Button><Fit w={36}>Súgó</Fit></Button>
        </Buttons>
      </DialogBody>
    </Dialog>
  );
}

const Spin = () => <FieldEnd $w={21} $line><Tri dir="up" /><Tri dir="down" /></FieldEnd>;

export default function App() {
  return (
    <Screen>
      <Global />
      <TopBar>
        <Grip $w={5} $h={17} />
        <IconSlot $w={52}>
          <svg width="34" height="24" viewBox="0 0 34 24"><rect x="10.500" y="3.500" width="14" height="7" fill="#f6f6f6" stroke="#c4c4c4" /><path d="M24 10L27 16M25 17C23 15 24 13 26 15L31 17C33 19 31 22 31 22M26 17C27 21 28 22 29 23" fill="none" stroke="#a5a5a5" strokeWidth="1.200" /><rect x="23" y="9" width="2" height="2" fill="#c55" /></svg>
        </IconSlot>
        <Grip $w={5} $h={17} />
        <IconSlot $w={42}>
          <svg width="33" height="24" viewBox="-9 0 33 24"><rect width="24" height="24" fill="#6fae4c" /><path d="M0 24L24 0H0Z" fill="#86bd63" opacity=".5" /><circle cx="14.500" cy="9.500" r="6.500" fill="none" stroke="#fff" strokeWidth="2.500" /><path d="M9.500 14.500L3 21.500" stroke="#fff" strokeWidth="3" /></svg>
        </IconSlot>
        <svg width="24" height="24" viewBox="0 0 24 24"><rect width="21" height="24" fill="#f5d84c" /><path d="M0 7L8 3V14L0 17Z" fill="#55a055" /><path d="M9 0H14L13 8H9Z" fill="#e8ecef" /><path d="M3 24C5 18 9 18 13 20L12 24ZM15 13C18 14 20 17 21 23H17Z" fill="#4a8be0" /><path d="M0 16L10 11M2 0L4 8M8 24L14 14" stroke="#c88" strokeWidth="1.500" /><path d="M2 8h4v4H2z" fill="#d9534f" /><path d="M22.500 1.500L11 14" stroke="#7d3612" strokeWidth="4.500" /><path d="M12 11L8 16L14 14Z" fill="#222" /></svg>
      </TopBar>
      <Main>
        <SideBar>
          <Grip $w={17} $h={5} $m="0 0 5px 14px" />
          {sideIcons.map(([icon, menu], i) => (
            <SideItem key={i}>
              <svg width="24" height="24" viewBox="0 0 24 24">{icon}</svg>
              {menu && <Tri dir="down" />}
            </SideItem>
          ))}
        </SideBar>
        <Panel>
          <PanelTitle>
            <Fit w={62}>Rétegek</Fit>
            <PanelButtons>
              <svg width="12" height="12" viewBox="0 0 12 12" fill="none" stroke="#666"><rect x=".5" y=".5" width="11" height="11" rx="2" /><rect x="5" y="2.500" width="4.500" height="4.500" /><rect x="2.500" y="5" width="4.500" height="4.500" fill="#efefef" /></svg>
              <svg width="12" height="12" viewBox="0 0 12 12" fill="none" stroke="#666"><rect x=".5" y=".5" width="11" height="11" rx="2" /><path d="M3 3L9 9M9 3L3 9" strokeWidth="2" stroke="#555" /></svg>
            </PanelButtons>
          </PanelTitle>
          <PanelTools>
            <svg width="212" height="18" viewBox="0 0 212 18">
              <path d="M15 2L10 7" stroke="#c88a2a" strokeWidth="2.500" /><path d="M0 6L7 4L12 9L6 15Z" fill="#e8863b" /><path d="M0 6L4 12L6 8Z" fill="#f5d84c" /><path d="M7 4L12 9" stroke="#c0392b" strokeWidth="2" />
              <g fill="none" stroke="#777"><path d="M28 6H26V15H34M31 4H29V12" /><rect x="31.500" y="3.500" width="6" height="8" fill="#e8e8e8" /><path d="M34.500 1V8" stroke="#3c6ea5" strokeWidth="1.500" /></g><path d="M36 9V15M33 12H39" stroke="#5c8f5c" strokeWidth="2.500" />
              <path d="M50 9C54 2 61 2 65 9C61 12 55 12 50 9Z" fill="#d5dde4" stroke="#8a949d" /><circle cx="57" cy="8" r="3.500" fill="#3d5873" /><path d="M56 9H67L61.500 15Z" fill="#555" />
              <path d="M75 2H89L84 8V16L80 14V8Z" fill="#6c9ac8" stroke="#4a78a6" strokeWidth=".8" /><rect x="75" y="1" width="14" height="3" fill="#f3e04c" />
              <path d="M108 3.500C105 1 102 3 103 5C103.500 6 105 6 106 6C103 6 102 8 103 9.500C104 11 107 11 108.500 9.500" fill="none" stroke="#6b3f70" strokeWidth="1.800" /><path d="M109 10H115V16H113V12H111V16H109Z" fill="#aaa" />
              <path d="M123 6H135L129 12Z" fill="#555" />
              <g transform="translate(.5 0)">
                <g fill="none" stroke="#8a8a8a"><path d="M144.500 2V15H152M144.500 3H156M144.500 8H148" /></g><rect x="147" y="5" width="4" height="4" fill="#f39c3d" /><rect x="147" y="12" width="4" height="4" fill="#f39c3d" /><path d="M151 1H155V9H158L153 15L148 9H151Z" fill="#4a80bd" stroke="#2f5a8a" strokeWidth=".8" />
                <g fill="none" stroke="#8a8a8a"><path d="M169.500 2V15H177M169.500 3H174M169.500 8H173" /></g><rect x="172" y="5" width="4" height="4" fill="#f39c3d" /><rect x="172" y="12" width="4" height="4" fill="#f39c3d" /><path d="M176 15H180V7H183L178 1L173 7H176Z" fill="#4a80bd" stroke="#2f5a8a" strokeWidth=".8" />
              </g>
              <rect x="193.500" y="1.500" width="12" height="12" fill="#f4f4f4" stroke="#6d6d6d" /><rect x="201" y="10.500" width="6.500" height="5" rx="1" fill="#e0444a" /><path d="M202.500 13H206" stroke="#fff" strokeWidth="1.300" />
            </svg>
          </PanelTools>
          <List>
            <Layers>{layers.map(l => <LayerItem key={l.name} l={l} />)}</Layers>
            <HBar>
              <HPart $w={20}><Tri dir="left" /></HPart>
              <HPart $w={297} />
              <Spacer />
              <HPart $w={21} $side="left"><Tri dir="right" /></HPart>
            </HBar>
          </List>
        </Panel>
        <Splitter><Grip $w={2} $h={17} $m="0 -7px 0 5px" /></Splitter>
        <MapPane><AfricaMap /></MapPane>
      </Main>
      <Status>
        <Field $w={392} $p={8}><Magnifier /><Gap $w={7} /><Muted><Fit w={218}>Írjon ide a kereséshez (Ctrl+K)</Fit></Muted></Field>
        <Gap $w={8} /><Fit w={290}>A réteg szerkeszthetőség be/kikapcsolása</Fit>
        <Gap $w={93} /><Fit w={76}>Koordináta</Fit>
        <Field $w={143} $m="0 0 0 3px" $p={6}><Fit w={129}>-1295995,675942</Fit></Field>
        <Gap $w={4} />
        <svg width="24" height="26" viewBox="0 0 24 26"><path d="M3 3L9 0L14 3L15 11L8 15L3 10Z" fill="#111" /><path d="M6 4L9 11M10 3L12 9" stroke="#fff" strokeWidth="1.800" /><circle cx="15" cy="18" r="7" fill="#111" /><circle cx="14" cy="17" r="4.500" fill="#fff" /><circle cx="14.500" cy="17" r="2" fill="#111" /><path d="M16 4L22 1M15 7L22 5M0 14L6 15M2 19L8 17" stroke="#222" strokeWidth="1.500" strokeDasharray="2 1.500" /></svg>
        <Gap $w={14} /><Fit w={78}>Méretarány</Fit>
        <Field $w={114} $m="0 0 0 3px" $p={3}><Fit w={77}>:19845596</Fit><FieldEnd $w={30}><Tri dir="down" /></FieldEnd></Field>
        <Gap $w={13} />
        <svg width="18" height="23" viewBox="0 0 18 23"><rect y="10" width="18" height="12.500" rx="1" fill="#666" /><path d="M3.500 10V7A5.500 5.500 0 0 1 14.500 7V10" fill="none" stroke="#777" strokeWidth="2.500" /></svg>
        <Gap $w={10} /><Fit w={59}>Nagyítás</Fit>
        <Field $w={105} $m="0 0 0 4px" $p={5}><Fit w={42}>100%</Fit><Spin /></Field>
        <Gap $w={9} /><Fit w={60}>Forgatás</Fit>
        <Field $w={101} $m="0 0 0 9px" $p={5}><Fit w={35}>0,0 °</Fit><Spin /></Field>
        <Check $m="0 8px 0 6px"><Tick /></Check><Fit w={72}>Megjelenít</Fit>
        <Gap $w={17} />
        <svg width="24" height="22" viewBox="0 0 24 22" fill="none" stroke="#666" strokeWidth="1.100"><circle cx="12" cy="10.500" r="9.500" /><ellipse cx="12" cy="10.500" rx="4.500" ry="9.500" /><path d="M12 1V20M4 5.500H20M5 15H19" /><rect x="1" y="8" width="22" height="3" fill="#888" stroke="#666" /></svg>
        <Gap $w={4} /><Fit w={80}>EPSG:3857</Fit>
        <Gap $w={22} />
        <svg width="25" height="23" viewBox="0 0 25 23"><path d="M12.500 1C5 1 .5 5 .5 10C.5 15 6 19 13 18.500C15 21 18 22.500 22 22C20 20.500 20 18 21 16.500C23.500 14.500 24.500 12.500 24.500 10C24.500 5 20 1 12.500 1Z" fill="#666" /><circle cx="7" cy="10" r="1.800" fill="#fff" /><circle cx="12.500" cy="10" r="1.800" fill="#fff" /><circle cx="18" cy="10" r="1.800" fill="#fff" /></svg>
      </Status>
      <CrsDialog />
    </Screen>
  );
}
